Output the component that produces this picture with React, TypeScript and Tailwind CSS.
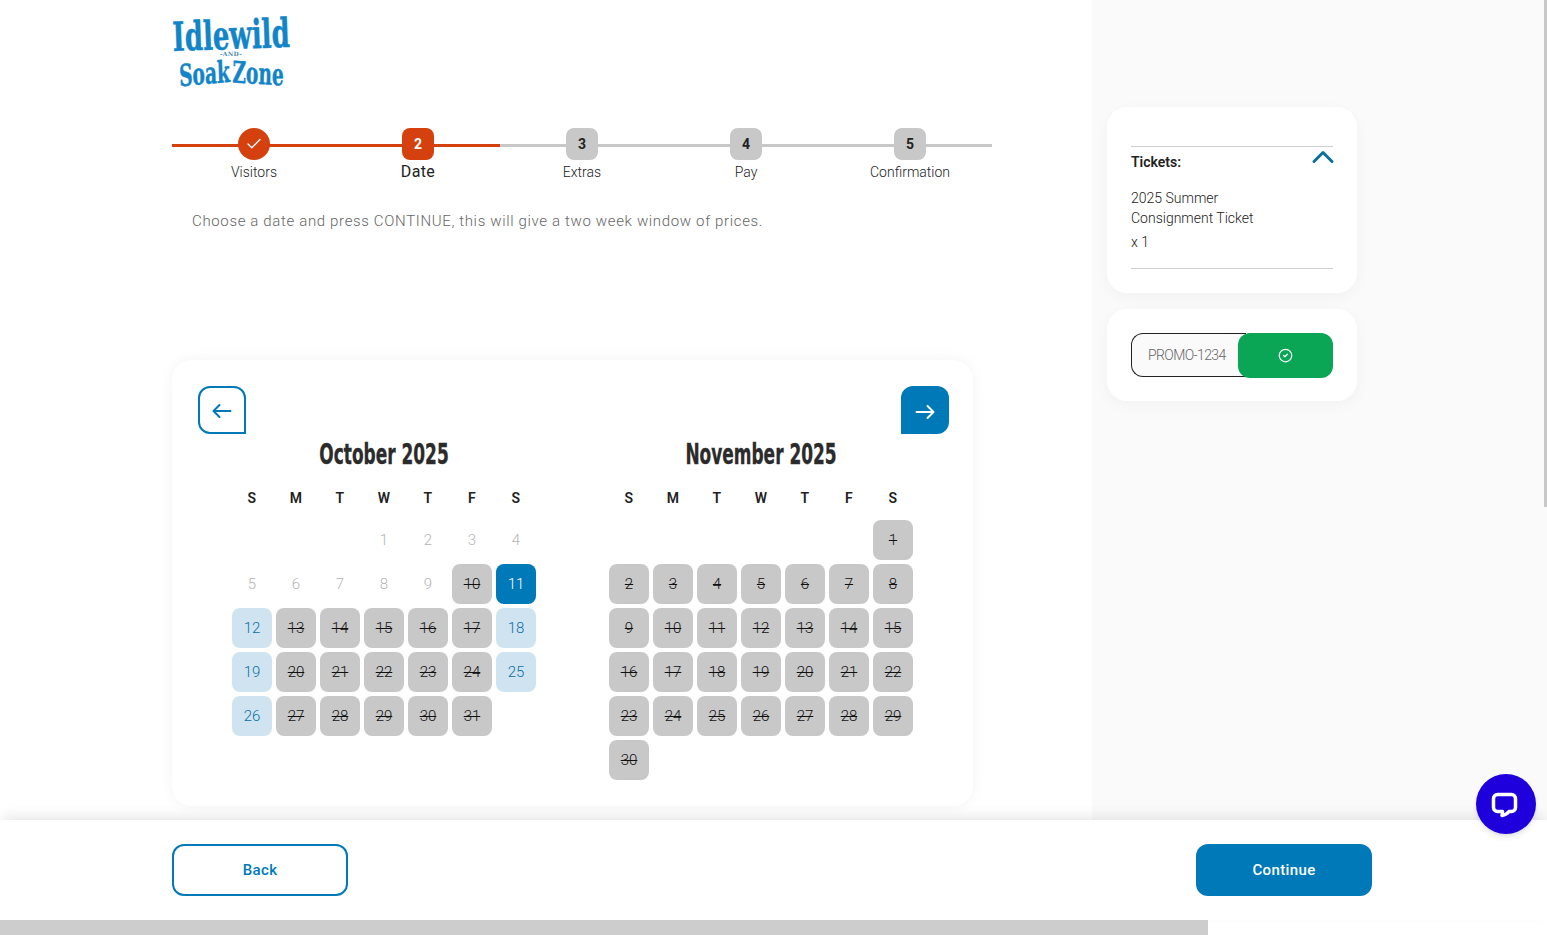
import React from 'react';
import { Check, ChevronUp, CircleCheck } from 'lucide-react';

const body = { fontFamily: 'Roboto, sans-serif' };

const steps = [
  { n: '1', label: 'Visitors', state: 'done' },
  { n: '2', label: 'Date', state: 'current' },
  { n: '3', label: 'Extras', state: 'todo' },
  { n: '4', label: 'Pay', state: 'todo' },
  { n: '5', label: 'Confirmation', state: 'todo' },
];

const weekdays = ['S', 'M', 'T', 'W', 'T', 'F', 'S'];

type Kind = 'past' | 'off' | 'open' | 'selected' | 'empty';
type Cell = { d?: number; kind: Kind };

const octoberOpen = [12, 18, 19, 25, 26];

const october: Cell[] = [
  ...Array.from({ length: 3 }, () => ({ kind: 'empty' as Kind })),
  ...Array.from({ length: 31 }, (_, i) => {
    const d = i + 1;
    let kind: Kind = 'off';
    if (d < 10) kind = 'past';
    if (d === 11) kind = 'selected';
    if (octoberOpen.includes(d)) kind = 'open';
    return { d, kind };
  }),
];

const november: Cell[] = [
  ...Array.from({ length: 6 }, () => ({ kind: 'empty' as Kind })),
  ...Array.from({ length: 30 }, (_, i) => ({ d: i + 1, kind: 'off' as Kind })),
];

const Day = ({ cell }: { cell: Cell }) => {
  if (cell.kind === 'empty') return <div className="w-10 h-10" />;
  if (cell.kind === 'past')
    return <div className="w-10 h-10 flex items-center justify-center text-[15px] font-light text-[#b4b4b4]">{cell.d}</div>;
  if (cell.kind === 'selected')
    return <div className="w-10 h-10 rounded-lg bg-[#0079b8] flex items-center justify-center text-[15px] font-light text-white">{cell.d}</div>;
  if (cell.kind === 'open')
    return <div className="w-10 h-10 rounded-lg bg-[#cfe4f0] flex items-center justify-center text-[15px] font-light text-[#0b6fa4]">{cell.d}</div>;
  return <div className="w-10 h-10 rounded-lg bg-[#c8c8c8] flex items-center justify-center text-[15px] font-light text-[#111] line-through">{cell.d}</div>;
};

const Month = ({ title, cells }: { title: string; cells: Cell[] }) => (
  <div className="w-[304px]">
    <h2
      className="text-center text-[29px] leading-[40px] font-bold text-[#2b2b2b] scale-x-[0.585] whitespace-nowrap [-webkit-text-stroke:0.4px_#2b2b2b]"
      style={{ fontFamily: '"DejaVu Sans", sans-serif' }}
    >
      {title}
    </h2>
    <div className="grid grid-cols-[repeat(7,40px)] gap-1 mt-[5px]">
      {weekdays.map((w, i) => (
        <div key={i} className="h-[37px] flex items-center justify-center text-sm font-semibold text-[#222] tracking-wide">{w}</div>
      ))}
      {cells.map((c, i) => <Day key={i} cell={c} />)}
    </div>
  </div>
);

const Step = ({ n, label, state }: { n: string; label: string; state: string }) => {
  const line = state === 'todo' ? 'bg-[#c8c8c8]' : 'bg-[#d5410e]';
  return (
    <div className="relative w-[164px] flex flex-col items-center">
      <div className={`absolute left-0 right-0 top-[16px] h-[3px] ${line}`} />
      {state === 'done' && (
        <div className="relative w-8 h-8 rounded-full bg-[#d5410e] flex items-center justify-center text-white">
          <Check size={18} strokeWidth={1.75} />
        </div>
      )}
      {state === 'current' && (
        <div className="relative w-8 h-8 rounded-lg bg-[#d5410e] flex items-center justify-center text-sm font-bold text-white">{n}</div>
      )}
      {state === 'todo' && (
        <div className="relative w-8 h-8 rounded-lg bg-[#c8c8c8] flex items-center justify-center text-sm font-bold text-[#222]">{n}</div>
      )}
      <div className={state === 'current' ? 'text-base leading-[24px] text-[#222] tracking-wide' : 'text-sm leading-[24px] font-light text-[#222]'}>
        {label}
      </div>
    </div>
  );
};

const Logo = () => (
  <div className="w-[118px] h-[72px] mt-4 flex flex-col items-center text-[#1285c8] [-webkit-text-stroke:0.5px_#1285c8]" style={{ fontFamily: '"DejaVu Serif", serif' }}>
    <div className="h-[35px] text-[40px] leading-[37px] font-bold scale-x-[0.65] whitespace-nowrap -rotate-2">Idlewild</div>
    <div className="h-[6px] text-[6px] leading-[6px] font-bold tracking-wider text-[#3f86b5] [-webkit-text-stroke:0px_#3f86b5]">-AND-</div>
    <div className="h-[31px] text-[30px] leading-[31px] font-bold scale-x-[0.62] whitespace-nowrap mt-[1px]">
      <span className="inline-block -rotate-3">Soak</span>
      <span className="inline-block rotate-2 ml-1">Zone</span>
    </div>
  </div>
);

const ArrowGlyph = ({ flip }: { flip?: boolean }) => (
  <svg width="20" height="20" viewBox="0 0 20 20" fill="none" stroke="currentColor" strokeWidth="2" strokeLinecap="round" strokeLinejoin="round" className={flip ? 'rotate-180 mt-[3px]' : 'mt-[1px]'}>
    <path d="M1.5 10H18.5M7.5 4L1.5 10L7.5 16" />
  </svg>
);

export default function App() {
  return (
    <div className="relative h-[935px] w-full overflow-hidden bg-white flex flex-col text-[#222]" style={body}>
      <div className="flex h-[820px]">
        {/* Main column */}
        <div className="w-[1092px] pl-[172px]">
          <Logo />
          <div className="flex mt-[40px] w-[820px]">
            {steps.map((s) => <Step key={s.n} {...s} />)}
          </div>
          <p className="mt-[25px] ml-5 text-[15px] leading-6 font-light tracking-[0.65px] text-[#666]">
            Choose a date and press CONTINUE, this will give a two week window of prices.
          </p>

          <div className="mt-[127px] w-[801px] h-[446px] rounded-[20px] bg-white shadow-[0_0_14px_rgba(0,0,0,0.05)] pl-[26px] pr-[24px] pt-[26px]">
            <div className="flex justify-between">
              <button className="w-12 h-12 rounded-xl rounded-br-none border-2 border-[#0079b8] text-[#0079b8] flex items-center justify-center">
                <ArrowGlyph />
              </button>
              <button className="w-12 h-12 rounded-xl rounded-bl-none bg-[#0079b8] text-white flex items-center justify-center">
                <ArrowGlyph flip />
              </button>
            </div>
            <div className="flex gap-[73px] pl-[34px]">
              <Month title="October 2025" cells={october} />
              <Month title="November 2025" cells={november} />
            </div>
          </div>
        </div>

        {/* Summary column */}
        <div className="flex-1 bg-[#fafafa] pl-[15px] pt-[107px]">
          <div className="w-[250px] h-[186px] rounded-[20px] bg-white shadow-[0_4px_14px_rgba(0,0,0,0.04)] px-6 pt-[39px]">
            <div className="h-[123px] border-y border-[#cfcfcf]">
              <div className="flex justify-between items-start">
                <span className="text-sm font-semibold leading-[30px]">Tickets:</span>
                <ChevronUp size={36} strokeWidth={2} className="text-[#0a6f9a] -mr-[8px] -mt-[8px]" />
              </div>
              <div className="mt-[11px] text-sm leading-5 font-light">2025 Summer<br />Consignment Ticket</div>
              <div className="mt-[4px] text-sm leading-5 font-light">x 1</div>
            </div>
          </div>
          <div className="mt-4 w-[250px] h-[92px] rounded-[20px] bg-white shadow-[0_4px_14px_rgba(0,0,0,0.04)] px-6 pt-6">
            <div className="relative flex">
              <div className="w-[115px] h-[44px] rounded-l-xl border border-r-0 border-[#222] bg-[#fafafa] pl-4 flex items-center text-sm tracking-[-0.6px] font-light text-[#666]">
                PROMO-1234
              </div>
              <button className="absolute left-[107px] top-0 w-[95px] h-[45px] rounded-xl bg-[#0aa655] text-white flex items-center justify-center">
                <CircleCheck size={15} strokeWidth={2} />
              </button>
            </div>
          </div>
        </div>
      </div>

      {/* Footer */}
      <div className="relative h-[100px] bg-white shadow-[0_-6px_12px_-2px_rgba(0,0,0,0.09)] flex justify-between items-start pt-6 pl-[172px] pr-[175px]">
        <button className="w-[176px] h-[52px] rounded-xl border-2 border-[#0079b8] text-[#0079b8] text-[15px] font-medium tracking-wide">Back</button>
        <button className="w-[176px] h-[52px] rounded-xl bg-[#0079b8] text-white text-[15px] font-medium tracking-wide">Continue</button>
      </div>
      <div className="relative h-[15px] w-[1208px] bg-[#cdcdcd]" />

      {/* Page scrollbar */}
      <div className="absolute right-0 top-0 w-[3px] h-[507px] bg-[#c8c8c8]" />

      {/* Chat widget */}
      <div className="absolute left-[1476px] top-[774px] w-[60px] h-[60px] rounded-full bg-[#1e00dc] shadow-md flex items-center justify-center">
        <svg width="30" height="30" viewBox="0 0 30 30" fill="none">
          <path d="M6.5 5.5h14a4 4 0 0 1 4 4v9a4 4 0 0 1-4 4H18c-1.5 2-4 3.5-7 4 .5-1.5.5-3 .5-4H6.5a4 4 0 0 1-4-4v-9a4 4 0 0 1 4-4Z" fill="#1e00dc" stroke="#fff" strokeWidth="3.5" strokeLinejoin="round" />
        </svg>
      </div>
    </div>
  );
}
